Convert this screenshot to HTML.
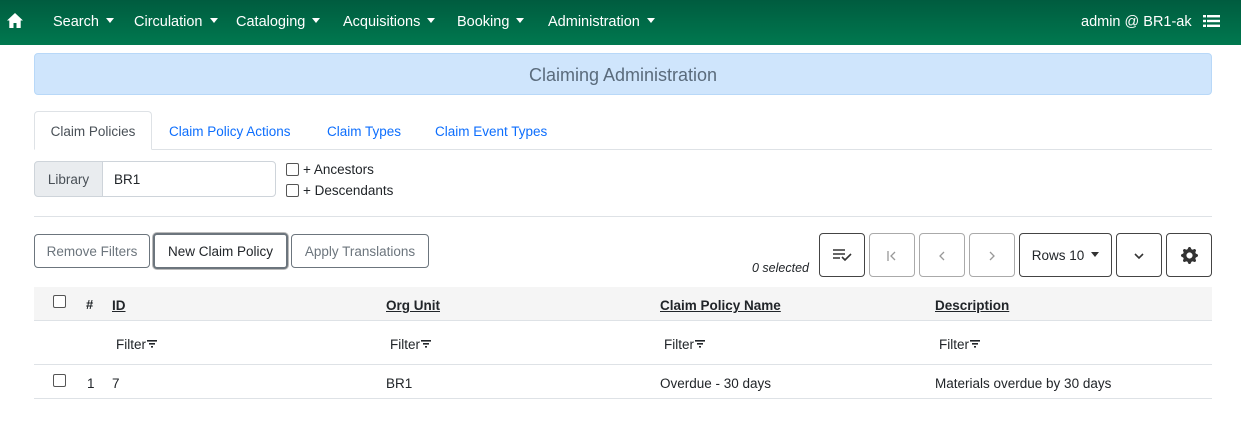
<!DOCTYPE html>
<html><head><style>
*{box-sizing:border-box;margin:0;padding:0}
body{width:1241px;height:434px;background:#fff;font-family:"Liberation Sans",sans-serif;font-size:14px;color:#212529;position:relative;overflow:hidden}
.nav{position:absolute;left:0;top:0;width:1241px;height:45px;background:linear-gradient(#005c3f,#00784f);color:#fff}
.nav span{position:absolute;top:14px;font-size:14.5px}
.caret{display:inline-block;border-left:4.5px solid transparent;border-right:4.5px solid transparent;border-top:5px solid #fff;vertical-align:3px;margin-left:7px}
.abs{position:absolute}
.hdr{left:34px;top:53px;width:1178px;height:42px;background:#cfe5fc;border:1px solid #b8d8f8;border-radius:4px;text-align:center;line-height:42px;font-size:18px;color:#5a6b7c}
.tab{top:112px;height:39px;line-height:39px;color:#0d6efd;font-size:13.5px}
.btn{border:1px solid #6c757d;border-radius:4px;background:#fff;text-align:center;font-size:13.5px}
.th{top:298px;font-weight:bold;text-decoration:underline;font-size:13.5px}
.cb{width:13px;height:13px;border:1px solid #555;border-radius:2px;background:#fff}
.f{top:337px;font-size:13.5px}
.r{top:376px;font-size:13.5px}
.fi{display:inline-block;vertical-align:1px;margin-left:1px}
</style></head><body>
<div class="nav">
<svg class="abs" style="left:6px;top:12px" width="18" height="17" viewBox="0 0 18 17"><path d="M9 1L1 8.5h2.3V16h4.2v-5h3v5h4.2V8.5H17z" fill="#fff"/></svg>
<span style="left:53px">Search<i class="caret"></i></span>
<span style="left:134px">Circulation<i class="caret"></i></span>
<span style="left:236px">Cataloging<i class="caret"></i></span>
<span style="left:343px">Acquisitions<i class="caret"></i></span>
<span style="left:457px">Booking<i class="caret"></i></span>
<span style="left:548px">Administration<i class="caret"></i></span>
<span style="left:1081px">admin @ BR1-ak</span>
<svg class="abs" style="left:1203px;top:15px" width="17" height="12" viewBox="0 0 17 12" fill="#fff"><rect x="0" y="0" width="3" height="2.4"/><rect x="4" y="0" width="13" height="2.4"/><rect x="0" y="4.8" width="3" height="2.4"/><rect x="4" y="4.8" width="13" height="2.4"/><rect x="0" y="9.6" width="3" height="2.4"/><rect x="4" y="9.6" width="13" height="2.4"/></svg>
</div>
<div class="abs hdr">Claiming Administration</div>
<div class="abs" style="left:34px;top:149px;width:1178px;border-top:1px solid #dee2e6"></div>
<div class="abs tab" style="left:34px;top:111px;width:118px;border:1px solid #dee2e6;border-bottom:1px solid #fff;border-radius:4px 4px 0 0;text-align:center;color:#495057;background:#fff;line-height:40px">Claim Policies</div>
<div class="abs tab" style="left:169px">Claim Policy Actions</div>
<div class="abs tab" style="left:327px">Claim Types</div>
<div class="abs tab" style="left:435px">Claim Event Types</div>
<div class="abs" style="left:34px;top:161px;width:69px;height:36px;background:#e9ecef;border:1px solid #ced4da;border-radius:4px 0 0 4px;line-height:36px;text-align:center;color:#495057;font-size:13.5px">Library</div>
<div class="abs" style="left:102px;top:161px;width:174px;height:36px;border:1px solid #ced4da;border-radius:0 4px 4px 0;line-height:36px;padding-left:11px;font-size:13.5px">BR1</div>
<div class="abs cb" style="left:286px;top:163px"></div><div class="abs" style="left:303px;top:162px;font-size:13.5px">+ Ancestors</div>
<div class="abs cb" style="left:286px;top:184px"></div><div class="abs" style="left:303px;top:183px;font-size:13.5px">+ Descendants</div>
<div class="abs" style="left:34px;top:216px;width:1178px;border-top:1px solid #dee2e6"></div>
<div class="abs btn" style="left:34px;top:234px;width:116px;height:34px;line-height:33px;color:#6c757d">Remove Filters</div>
<div class="abs btn" style="left:153px;top:233px;width:135px;height:36px;line-height:34px;border:2px solid #6c757d;box-shadow:0 0 0 1px #bbb">New Claim Policy</div>
<div class="abs btn" style="left:291px;top:234px;width:138px;height:34px;line-height:33px;color:#6c757d">Apply Translations</div>
<div class="abs" style="left:752px;top:261px;font-style:italic;font-size:12.5px">0 selected</div>
<div class="abs btn" style="left:819px;top:233px;width:46px;height:44px;border-color:#444"><svg style="margin-top:14px" width="20" height="14" viewBox="0 0 20 14" stroke="#333" stroke-width="1.6" fill="none"><path d="M1 2h12M1 6h12M1 10h7M10 9l3 3 6-6"/></svg></div>
<div class="abs btn" style="left:869px;top:233px;width:46px;height:44px;border-color:#aaa"><svg style="margin-top:16px" width="12" height="12" viewBox="0 0 12 12" stroke="#999" stroke-width="1.3" fill="none"><path d="M2 1v10M9 2L5 6l4 4"/></svg></div>
<div class="abs btn" style="left:919px;top:233px;width:46px;height:44px;border-color:#aaa"><svg style="margin-top:16px" width="12" height="12" viewBox="0 0 12 12" stroke="#999" stroke-width="1.3" fill="none"><path d="M8 2L4 6l4 4"/></svg></div>
<div class="abs btn" style="left:969px;top:233px;width:46px;height:44px;border-color:#aaa"><svg style="margin-top:16px" width="12" height="12" viewBox="0 0 12 12" stroke="#999" stroke-width="1.3" fill="none"><path d="M4 2l4 4-4 4"/></svg></div>
<div class="abs btn" style="left:1019px;top:233px;width:93px;height:44px;border-color:#444;line-height:44px">Rows 10<i class="caret" style="border-top-color:#333"></i></div>
<div class="abs btn" style="left:1116px;top:233px;width:46px;height:44px;border-color:#444"><svg style="margin-top:18px" width="12" height="8" viewBox="0 0 12 8"><path d="M2 2l4 4 4-4" stroke="#333" stroke-width="1.6" fill="none"/></svg></div>
<div class="abs btn" style="left:1166px;top:233px;width:46px;height:44px;border-color:#444"><svg style="margin-top:13px" width="17" height="17" viewBox="0 0 16 16"><path fill="#333" d="M9.4 1.1c-.4-1.5-2.4-1.5-2.8 0l-.1.3a1.5 1.5 0 0 1-2.1.9l-.3-.2c-1.3-.8-2.8.7-2 2l.2.3a1.5 1.5 0 0 1-.9 2.1l-.3.1c-1.5.4-1.5 2.4 0 2.8l.3.1a1.5 1.5 0 0 1 .9 2.1l-.2.3c-.8 1.3.7 2.8 2 2l.3-.2a1.5 1.5 0 0 1 2.1.9l.1.3c.4 1.5 2.4 1.5 2.8 0l.1-.3a1.5 1.5 0 0 1 2.1-.9l.3.2c1.3.8 2.8-.7 2-2l-.2-.3a1.5 1.5 0 0 1 .9-2.1l.3-.1c1.5-.4 1.5-2.4 0-2.8l-.3-.1a1.5 1.5 0 0 1-.9-2.1l.2-.3c.8-1.3-.7-2.8-2-2l-.3.2a1.5 1.5 0 0 1-2.1-.9zM8 10.9a2.9 2.9 0 1 1 0-5.8 2.9 2.9 0 0 1 0 5.8z"/></svg></div>
<div class="abs" style="left:34px;top:287px;width:1178px;height:34px;background:#f5f5f5;border-bottom:1px solid #dee2e6"></div>
<div class="abs cb" style="left:53px;top:295px"></div>
<div class="abs" style="left:86px;top:297px;font-weight:bold;font-size:13px">#</div>
<div class="abs th" style="left:112px">ID</div>
<div class="abs th" style="left:386px">Org Unit</div>
<div class="abs th" style="left:660px">Claim Policy Name</div>
<div class="abs th" style="left:935px">Description</div>
<div class="abs f" style="left:116px">Filter<svg class="fi" width="10" height="8" viewBox="0 0 10 8" fill="#212529"><rect x="0" y="0" width="10" height="1.6"/><rect x="2" y="3" width="6" height="1.6"/><rect x="4" y="6" width="2" height="1.6"/></svg></div>
<div class="abs f" style="left:390px">Filter<svg class="fi" width="10" height="8" viewBox="0 0 10 8" fill="#212529"><rect x="0" y="0" width="10" height="1.6"/><rect x="2" y="3" width="6" height="1.6"/><rect x="4" y="6" width="2" height="1.6"/></svg></div>
<div class="abs f" style="left:664px">Filter<svg class="fi" width="10" height="8" viewBox="0 0 10 8" fill="#212529"><rect x="0" y="0" width="10" height="1.6"/><rect x="2" y="3" width="6" height="1.6"/><rect x="4" y="6" width="2" height="1.6"/></svg></div>
<div class="abs f" style="left:939px">Filter<svg class="fi" width="10" height="8" viewBox="0 0 10 8" fill="#212529"><rect x="0" y="0" width="10" height="1.6"/><rect x="2" y="3" width="6" height="1.6"/><rect x="4" y="6" width="2" height="1.6"/></svg></div>
<div class="abs" style="left:34px;top:364px;width:1178px;border-top:1px solid #dee2e6"></div>
<div class="abs cb" style="left:53px;top:374px"></div>
<div class="abs r" style="left:87px">1</div>
<div class="abs r" style="left:112px">7</div>
<div class="abs r" style="left:386px">BR1</div>
<div class="abs r" style="left:660px">Overdue - 30 days</div>
<div class="abs r" style="left:935px">Materials overdue by 30 days</div>
<div class="abs" style="left:34px;top:398px;width:1178px;border-top:1px solid #dee2e6"></div>
</body></html>
